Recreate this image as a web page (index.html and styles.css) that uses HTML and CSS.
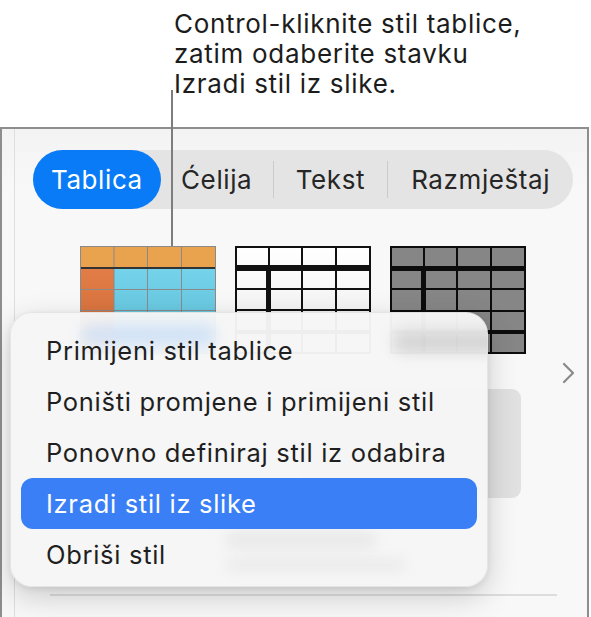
FILE: index.html
```html
<!DOCTYPE html>
<html lang="hr">
<head>
    <meta charset="UTF-8">
    <meta name="viewport" content="width=device-width, initial-scale=1.0">
    <title>Stil tablice</title>
    <link rel="stylesheet" href="styles.css">
</head>
<body>
    <p class="callout">Control-kliknite stil tablice,<br>zatim odaberite stavku<br>Izradi stil iz slike.</p>
    <div class="leader"></div>

    <div class="panel">
        <div class="pane">
            <div class="tabs">
                <div class="tab active">Tablica</div>
                <div class="tab tab-celija">Ćelija</div>
                <div class="tab tab-tekst">Tekst</div>
                <div class="tab tab-raz">Razmještaj</div>
            </div>

            <div class="styles-row">
                <!-- obojeni stil -->
                <svg class="thumb" width="136" height="108" viewBox="0 0 136 108">
                    <defs>
                        <linearGradient id="cyan" x1="0" y1="0" x2="0" y2="1">
                            <stop offset="0" stop-color="#74d3ea"/>
                            <stop offset="1" stop-color="#5cbdd6"/>
                        </linearGradient>
                        <linearGradient id="rust" x1="0" y1="0" x2="0" y2="1">
                            <stop offset="0" stop-color="#e27d47"/>
                            <stop offset="1" stop-color="#cf6a38"/>
                        </linearGradient>
                    </defs>
                    <rect x="0" y="0" width="136" height="22" fill="#e9a24e"/>
                    <rect x="0" y="22" width="34" height="86" fill="url(#rust)"/>
                    <rect x="34" y="22" width="102" height="86" fill="url(#cyan)"/>
                    <g stroke="#8a8a8a" stroke-width="1" fill="none">
                        <rect x="0.5" y="0.5" width="135" height="107"/>
                        <line x1="34" y1="0" x2="34" y2="108"/>
                        <line x1="67.5" y1="0" x2="67.5" y2="108"/>
                        <line x1="101.5" y1="0" x2="101.5" y2="108"/>
                        <line x1="0" y1="43.5" x2="136" y2="43.5"/>
                        <line x1="0" y1="64.5" x2="136" y2="64.5"/>
                        <line x1="0" y1="86.5" x2="136" y2="86.5"/>
                    </g>
                    <rect x="1" y="21" width="134" height="2" fill="#333"/>
                </svg>

                <!-- crno-bijeli stil -->
                <svg class="thumb" width="136" height="108" viewBox="0 0 136 108">
                    <defs>
                        <linearGradient id="paper" x1="0" y1="0" x2="0" y2="1">
                            <stop offset="0" stop-color="#ffffff"/>
                            <stop offset="1" stop-color="#ececec"/>
                        </linearGradient>
                    </defs>
                    <rect x="0" y="0" width="136" height="108" fill="url(#paper)"/>
                    <g fill="#111">
                        <rect x="0" y="0" width="136" height="2"/>
                        <rect x="0" y="106" width="136" height="2"/>
                        <rect x="0" y="0" width="2" height="108"/>
                        <rect x="134" y="0" width="2" height="108"/>
                        <rect x="0" y="19" width="136" height="6"/>
                        <rect x="31" y="19" width="5" height="89"/>
                        <rect x="33" y="0" width="2" height="19"/>
                        <rect x="66" y="0" width="2" height="108"/>
                        <rect x="100" y="0" width="2" height="108"/>
                        <rect x="0" y="42" width="136" height="2"/>
                        <rect x="0" y="63" width="136" height="2"/>
                        <rect x="0" y="84" width="136" height="4"/>
                    </g>
                </svg>

                <!-- sivi stil -->
                <svg class="thumb" width="136" height="108" viewBox="0 0 136 108">
                    <rect x="0" y="0" width="136" height="108" fill="#868686"/>
                    <g fill="#0c0c0c">
                        <rect x="0" y="0" width="136" height="2"/>
                        <rect x="0" y="106" width="136" height="2"/>
                        <rect x="0" y="0" width="2" height="108"/>
                        <rect x="134" y="0" width="2" height="108"/>
                        <rect x="0" y="20" width="136" height="5"/>
                        <rect x="31" y="20" width="5" height="88"/>
                        <rect x="33" y="0" width="2" height="20"/>
                        <rect x="66" y="0" width="2" height="108"/>
                        <rect x="100" y="0" width="2" height="108"/>
                        <rect x="0" y="42" width="136" height="2"/>
                        <rect x="0" y="64" width="136" height="2"/>
                        <rect x="0" y="84" width="136" height="4"/>
                    </g>
                </svg>

                <svg class="chevron" width="14" height="22" viewBox="0 0 14 22">
                    <polyline points="2,2 11,11 2,20" fill="none" stroke="#8a8a8a" stroke-width="2.2" stroke-linecap="round" stroke-linejoin="round"/>
                </svg>
            </div>

            <div class="card"></div>
            <div class="divider"></div>
        </div>

        <div class="menu">
            <div class="ghost ghost-blue"></div>
            <div class="ghost ghost-gray"></div>
            <div class="ghost ghost-text1"></div>
            <div class="ghost ghost-text2"></div>
            <div class="menu-item">Primijeni stil tablice</div>
            <div class="menu-item">Poništi promjene i primijeni stil</div>
            <div class="menu-item">Ponovno definiraj stil iz odabira</div>
            <div class="menu-item selected">Izradi stil iz slike</div>
            <div class="menu-item">Obriši stil</div>
        </div>
    </div>
</body>
</html>
```

FILE: styles.css
```css
body {
    margin: 0;
    background: #ffffff;
    font-family: Inter, "Noto Sans", "Liberation Sans", sans-serif;
    color: #1d1d1f;
    position: relative;
    height: 617px;
    overflow: hidden;
}
.callout {
    margin: 0;
    padding: 9px 0 0 174px;
    font-size: 26px;
    letter-spacing: 0.7px;
    line-height: 30px;
    color: #1c1c1c;
    height: 127px;
    box-sizing: border-box;
}
.leader {
    position: absolute;
    left: 171px;
    top: 90px;
    width: 2px;
    height: 156px;
    background: #7d7d7d;
    z-index: 2;
}
.panel {
    position: relative;
    width: 589px;
    height: 490px;
    box-sizing: border-box;
    border-top: 2px solid #8e8e8e;
    border-left: 2px solid #8e8e8e;
    border-right: 2px solid #8e8e8e;
    background: linear-gradient(#f3f3f3, #f8f8f8 60px);
    padding-left: 12px;
}
.pane {
    border-left: 1px solid #dedede;
    height: 100%;
    padding-top: 21px;
    box-sizing: border-box;
}
.tabs {
    display: flex;
    margin-left: 18px;
    width: 540px;
    height: 59px;
    border-radius: 30px;
    background: #e4e4e4;
    align-items: center;
}
.tab {
    font-size: 26px;
    letter-spacing: 0.6px;
    color: #262626;
    text-align: center;
}
.tab.active {
    width: 128px;
    height: 59px;
    line-height: 59px;
    border-radius: 30px;
    background: #0a7bf6;
    color: #ffffff;
}
.tab-celija { width: 112px; }
.tab-tekst { width: 114px; border-left: 1px solid #cbcbcb; }
.tab-raz { width: 185px; border-left: 1px solid #cbcbcb; }
.tab-tekst, .tab-raz {
    height: 37px;
    line-height: 37px;
}
.styles-row {
    display: flex;
    align-items: flex-start;
    gap: 19px;
    margin: 37px 0 0 65px;
}
.thumb {
    display: block;
    flex: none;
}
.chevron {
    margin: 116px 0 0 17px;
    flex: none;
}
.card {
    margin: 5px 0 0 285px;
    width: 221px;
    height: 109px;
    border-radius: 9px;
    background: #e1e1e1;
}
.divider {
    margin: 96px 0 0 35px;
    width: 507px;
    height: 2px;
    background: #dddddd;
}
.menu {
    position: absolute;
    left: 8px;
    top: 183px;
    width: 478px;
    height: 275px;
    box-sizing: border-box;
    padding: 12px 10px 8px;
    border-radius: 22px;
    background: rgba(246, 246, 246, 0.97);
    border: 1px solid rgba(0, 0, 0, 0.07);
    box-shadow: 0 10px 30px rgba(0, 0, 0, 0.18), 0 2px 6px rgba(0, 0, 0, 0.08);
    overflow: hidden;
    z-index: 3;
}
.menu-item {
    position: relative;
    height: 51px;
    line-height: 51px;
    padding-left: 25px;
    border-radius: 12px;
    font-size: 25.5px;
    letter-spacing: 0.7px;
    color: #1f1f1f;
}
.menu-item.selected {
    background: #3a7ff6;
    color: #ffffff;
}
.ghost {
    position: absolute;
    filter: blur(7px);
    border-radius: 10px;
}
.ghost-blue {
    left: 70px;
    top: 12px;
    width: 135px;
    height: 20px;
    background: rgba(150, 195, 250, 0.35);
}
.ghost-gray {
    left: 382px;
    top: 18px;
    width: 110px;
    height: 22px;
    background: rgba(150, 150, 150, 0.3);
}
.ghost-text1 {
    left: 215px;
    top: 220px;
    width: 150px;
    height: 14px;
    background: rgba(160, 160, 160, 0.18);
}
.ghost-text2 {
    left: 215px;
    top: 246px;
    width: 180px;
    height: 12px;
    background: rgba(160, 160, 160, 0.14);
}
```
